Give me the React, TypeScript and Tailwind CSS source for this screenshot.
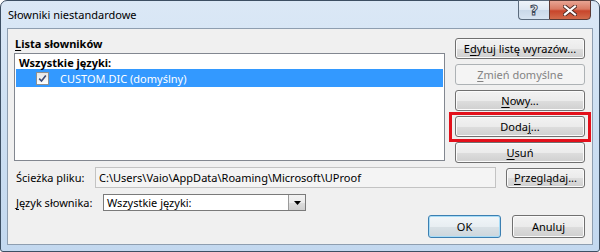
import React from "react";

const font = { fontFamily: '"Noto Sans", "Open Sans", sans-serif' };

function Btn({ children, disabled, def, className = "" }: { children: React.ReactNode; disabled?: boolean; def?: boolean; className?: string }) {
  if (disabled) {
    return (
      <div className={`shrink-0 flex items-center justify-center rounded-[3px] border border-[#adb2b5] bg-[#f4f4f4] text-[#838383] ${className}`}>
        {children}
      </div>
    );
  }
  if (def) {
    return (
      <div className={`shrink-0 flex items-center justify-center rounded-[3px] border border-[#3c7fb1] bg-[linear-gradient(to_bottom,#f1f6f9_0%,#e8eef2_50%,#d9e1e6_51%,#cdd6dc_100%)] shadow-[inset_0_0_0_1px_#a7dcf7] text-black ${className}`}>
        {children}
      </div>
    );
  }
  return (
    <div className={`shrink-0 flex items-center justify-center rounded-[3px] border border-[#707070] bg-[linear-gradient(to_bottom,#f2f2f2_0%,#ebebeb_50%,#dddddd_51%,#cfcfcf_100%)] shadow-[inset_0_0_0_1px_#fbfbfb] text-black ${className}`}>
      {children}
    </div>
  );
}

export default function App() {
  return (
    <div className="relative w-[600px] h-[252px] bg-white overflow-hidden text-[11px] leading-none" style={font}>
      <div className="w-[600px] h-[252px] rounded-t-[7px] rounded-b-[3px] border border-[#3d4f63] bg-[linear-gradient(to_bottom,#dbe8f6_0%,#cfe1f3_40%,#c3d8ef_100%)] flex flex-col">
        {/* title bar */}
        <div className="h-[27px] flex items-start shrink-0">
          <div className="pl-[7px] pt-[8px] text-black text-[11px]">Słowniki niestandardowe</div>
          <div className="ml-auto mr-[8px] -mt-px flex h-[20px]">
            <div className="w-[31px] h-[20px] rounded-bl-[4px] border border-[#5b6b7d] border-r-0 bg-[linear-gradient(to_bottom,#eef3f9_0%,#dde7f2_50%,#c9d8e8_51%,#d7e4f1_100%)] flex items-center justify-center">
              <span className="text-[14px] font-bold text-white leading-none [-webkit-text-stroke:1px_#3e4c5c]" style={{ fontFamily: '"DejaVu Sans", sans-serif' }}>?</span>
            </div>
            <div className="w-[42px] h-[20px] rounded-br-[4px] border border-[#5b3a35] bg-[linear-gradient(to_bottom,#e8a493_0%,#d97a63_45%,#c8452b_55%,#d26b4b_100%)] flex items-center justify-center">
              <svg width="14" height="11" viewBox="0 0 14 11">
                <path d="M2 1.5 L12 9.5 M12 1.5 L2 9.5" stroke="#4d2a24" strokeWidth="4" strokeLinecap="square" />
                <path d="M2 1.5 L12 9.5 M12 1.5 L2 9.5" stroke="#ffffff" strokeWidth="2.2" strokeLinecap="square" />
              </svg>
            </div>
          </div>
        </div>
        {/* client */}
        <div className="flex-1 mx-[6px] mb-[6px] border border-[#8e9eb0] bg-[#f0f0f0] flex flex-col">
          <div className="flex pt-[9px] pl-[6px] pr-[7px]">
            <div className="w-[431px] shrink-0 flex flex-col">
              <div className="h-[15px] pl-[1px] font-bold flex items-start"><span><span className="underline underline-offset-2">L</span>ista słowników</span></div>
              <div className="h-[108px] border border-[#828790] bg-white p-[1px]">
                <div className="h-[14px] pl-[3px] font-bold flex items-center">Wszystkie języki:</div>
                <div className="h-[18px] bg-[#3399ff] flex items-center text-white">
                  <div className="ml-[20px] w-[13px] h-[13px] border border-[#8e8f8f] bg-[linear-gradient(to_bottom,#e6e6e6,#ffffff)] flex items-center justify-center">
                    <svg width="9" height="9" viewBox="0 0 9 9">
                      <path d="M1.2 4.6 L3.5 7 L7.8 1.5" stroke="#3c4a75" strokeWidth="1.6" fill="none" />
                    </svg>
                  </div>
                  <span className="ml-[11px]">CUSTOM.DIC (domyślny)</span>
                </div>
              </div>
            </div>
            <div className="ml-[10px] w-[130px] shrink-0 flex flex-col gap-[5px]">
              <Btn className="h-[21px]"><span>E<span className="underline underline-offset-2">d</span>ytuj listę wyrazów...</span></Btn>
              <Btn disabled className="h-[21px]"><span><span className="underline underline-offset-2">Z</span>mień domyślne</span></Btn>
              <Btn className="h-[21px]"><span><span className="underline underline-offset-2">N</span>owy...</span></Btn>
              <Btn className="h-[21px]"><span>Doda<span className="underline underline-offset-2">j</span>...</span></Btn>
              <Btn className="h-[21px]"><span><span className="underline underline-offset-2">U</span>suń</span></Btn>
            </div>
          </div>
          <div className="mt-[4px] h-[21px] flex items-center pl-[8px] pr-[7px]">
            <span className="w-[79px] shrink-0">Ścieżka pliku:</span>
            <div className="w-[401px] shrink-0 h-[21px] border border-[#c3c3c3] bg-[#f4f4f4] flex items-center pl-[3px] text-black">C:\Users\Vaio\AppData\Roaming\Microsoft\UProof</div>
            <Btn className="ml-auto w-[79px] h-[20px]"><span><span className="underline underline-offset-2">P</span>rzeglądaj...</span></Btn>
          </div>
          <div className="mt-[6px] h-[17px] flex items-center pl-[8px]">
            <span className="w-[87px] shrink-0"><span className="underline underline-offset-2">J</span>ęzyk słownika:</span>
            <div className="w-[203px] shrink-0 h-[17px] border border-[#7a7a7a] bg-white flex items-center">
              <span className="pl-[3px] flex-1">Wszystkie języki:</span>
              <div className="w-[17px] h-[15px] border-l border-[#9a9a9a] bg-[linear-gradient(to_bottom,#f2f2f2_0%,#ebebeb_50%,#dddddd_51%,#cfcfcf_100%)] flex items-center justify-center">
                <svg width="7" height="4" viewBox="0 0 7 4"><path d="M0 0 H7 L3.5 4 Z" fill="#000" /></svg>
              </div>
            </div>
          </div>
          <div className="mt-[4px] h-[23px] flex justify-end pr-[7px] gap-[11px]">
            <Btn def className="w-[73px] h-[23px]">OK</Btn>
            <Btn className="w-[73px] h-[23px]">Anuluj</Btn>
          </div>
        </div>
      </div>
      {/* red highlight */}
      <div className="absolute left-[449px] top-[112px] w-[142px] h-[30px] border-[3px] border-[#e3101b]" />
    </div>
  );
}
